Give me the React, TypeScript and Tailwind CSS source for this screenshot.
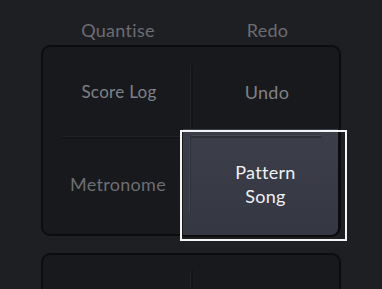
import React from 'react';

const font = { fontFamily: 'Lato, "Noto Sans", sans-serif' };

const App: React.FC = () => {
  return (
    <div className="w-[382px] h-[289px] overflow-hidden bg-[#1e1f23]" style={font}>
      <div className="w-[300px] ml-[41px]">
        {/* Top labels */}
        <div className="grid grid-cols-2 h-[45px] pt-[18px] tracking-[0.3px]">
          <div className="text-center text-[18px] leading-[24px] text-[#6c6d72] pl-[4px]">Quantise</div>
          <div className="text-center text-[18px] leading-[24px] text-[#6c6d72] pl-[3px]">Redo</div>
        </div>

        {/* Main pad */}
        <div className="relative h-[191px] rounded-[9px] border-2 border-[#0c0d0f] bg-[#18191c] grid grid-cols-2 grid-rows-[84px_105px] tracking-[0.3px]">
          {/* grooves */}
          <div className="absolute left-[147px] top-[17px] w-[3px] h-[152px] rounded-full bg-[#131416] border-l border-[#222327]" />
          <div className="absolute left-[19px] top-[89px] w-[258px] h-[3px] rounded-full bg-[#131416] border-t border-[#222327]" />

          <div className="relative flex items-center justify-center pt-[6px] pl-[4px] text-[17px] text-[#808186]">Score Log</div>
          <div className="relative flex items-center justify-center pt-[6px] pl-[4px] text-[18px] text-[#808186]">Undo</div>
          <div className="relative flex items-center justify-center pt-[2px] pl-[2px] text-[18px] text-[#6d6e73]">Metronome</div>
          <div className="relative -ml-[8px] -mt-[2px] -mr-[1px] -mb-[1px] rounded-br-[9px] border-b-2 border-r-2 border-[#0b0c0e] bg-gradient-to-b from-[#3c3e49] to-[#353742] flex flex-col items-center justify-center pl-[10px] pt-[3px] text-[18px] leading-[24px] text-[#f1f1f4]">
            <div className="absolute left-[6px] top-[6px] w-[2px] h-[78px] rounded-full bg-[#2f3139] border-l border-[#44464f]" />
            <div className="absolute left-[8px] top-[6px] right-[16px] h-[3px] rounded-full bg-[#2f3139] border-t border-[#474953]" />
            <span>Pattern</span>
            <span>Song</span>
          </div>

          {/* selection box */}
          <div className="absolute left-[137px] top-[83px] w-[167px] h-[111px] border-2 border-[#f4f4f4]" />
        </div>

        {/* next pad */}
        <div className="relative mt-[17px] h-[60px] rounded-[9px] border-2 border-[#0c0d0f] bg-[#18191c]">
          <div className="absolute left-[147px] top-[14px] w-[3px] h-[40px] rounded-full bg-[#131416] border-l border-[#222327]" />
        </div>
      </div>
    </div>
  );
};

export default App;
